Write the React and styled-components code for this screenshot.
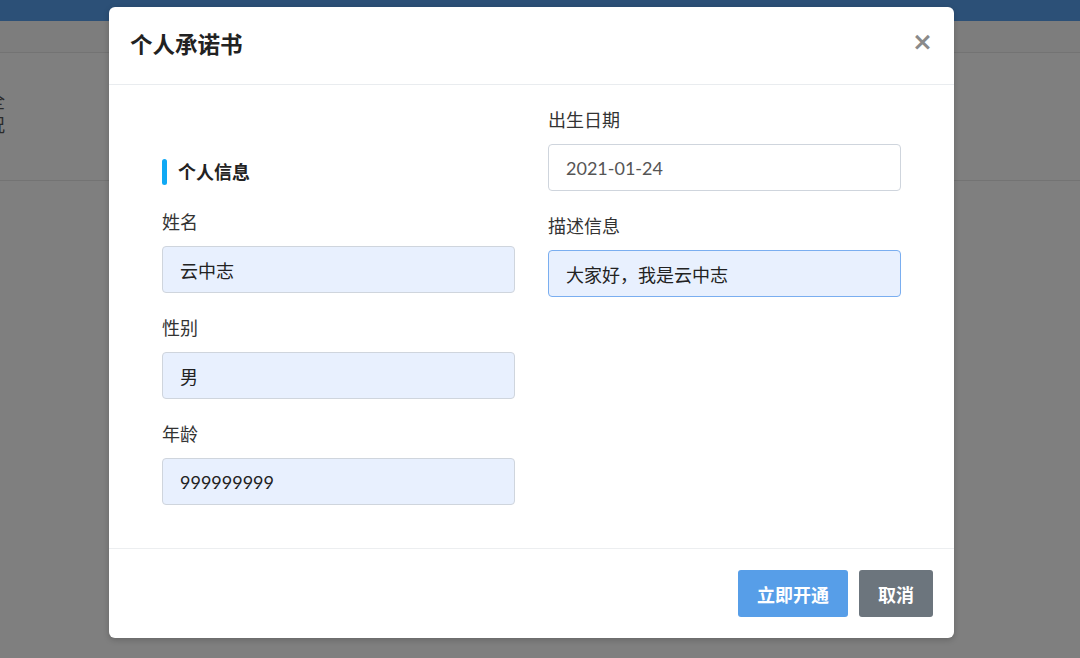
import React from "react";
import styled, { createGlobalStyle } from "styled-components";

const GlobalStyle = createGlobalStyle`
  html, body {
    margin: 0;
    padding: 0;
  }
  body {
    font-family: Lato, "Noto Sans CJK SC", sans-serif;
    color: #333;
    background: #fff;
    overflow: hidden;
  }
  * {
    box-sizing: border-box;
  }
`;

const App = () => {
  return (
    <Page>
      <GlobalStyle />
      <TopBar />
      <TabBar />
      <Section>
        <Fragment>全</Fragment>
        <Fragment>况</Fragment>
      </Section>

      <Overlay>
        <Modal>
          <Header>
            <Title>个人承诺书</Title>
            <Close aria-label="关闭">×</Close>
          </Header>

          <Body>
            <Column $offset>
              <Heading>个人信息</Heading>
              <Field>
                <Label>姓名</Label>
                <Input $filled defaultValue="云中志" readOnly />
              </Field>
              <Field>
                <Label>性别</Label>
                <Input $filled defaultValue="男" readOnly />
              </Field>
              <Field>
                <Label>年龄</Label>
                <Input $filled defaultValue="999999999" readOnly />
              </Field>
            </Column>

            <Column>
              <Field>
                <Label>出生日期</Label>
                <Input $muted defaultValue="2021-01-24" readOnly />
              </Field>
              <Field>
                <Label>描述信息</Label>
                <Input $filled $focused defaultValue="大家好，我是云中志" readOnly />
              </Field>
            </Column>
          </Body>

          <Footer>
            <Button $primary>立即开通</Button>
            <Button>取消</Button>
          </Footer>
        </Modal>
      </Overlay>
    </Page>
  );
};

export default App;

const Page = styled.div`
  position: relative;
  width: 100%;
  height: 100vh;
  overflow: hidden;
`;

const TopBar = styled.div`
  height: 21px;
  background: #58a0ee;
`;

const TabBar = styled.div`
  height: 32px;
  background: #fafafa;
  border-bottom: 1px solid #e6e6e6;
`;

const Section = styled.div`
  height: 128px;
  padding-top: 36px;
  border-bottom: 1px solid #e6e6e6;
`;

const Fragment = styled.div`
  margin-left: -13px;
  font-size: 18px;
  line-height: 24px;
  color: #555;
`;

const Overlay = styled.div`
  position: absolute;
  inset: 0;
  background: rgba(0, 0, 0, 0.5);
  display: flex;
  justify-content: flex-start;
  align-items: flex-start;
  padding: 7px 0 0 109px;
`;

const Modal = styled.div`
  width: 845px;
  background: #fff;
  border-radius: 6px;
  box-shadow: 0 2px 6px rgba(0, 0, 0, 0.2);
  display: flex;
  flex-direction: column;
`;

const Header = styled.div`
  height: 78px;
  padding: 0 22px 0 21px;
  display: flex;
  align-items: center;
  justify-content: space-between;
  border-bottom: 1px solid #e9ecef;
`;

const Title = styled.h2`
  margin: 0;
  font-size: 22.5px;
  font-weight: 700;
  color: #222;
  line-height: 1;
`;

const Close = styled.span`
  font-family: "DejaVu Sans", sans-serif;
  font-size: 25px;
  font-weight: 700;
  line-height: 1;
  color: #8a8a8a;
  margin-top: -8px;
  margin-right: -1px;
  cursor: pointer;
`;

const Body = styled.div`
  display: grid;
  grid-template-columns: 353px 353px;
  column-gap: 33px;
  padding: 22px 53px 21px;
`;

const Column = styled.div`
  display: flex;
  flex-direction: column;
  padding-top: ${(props) => (props.$offset ? "52px" : "0")};
`;

const Heading = styled.h3`
  margin: 0 0 23px;
  position: relative;
  padding-left: 16px;
  font-size: 18px;
  line-height: 27px;
  font-weight: 700;
  color: #222;
  display: flex;
  align-items: center;

  &::before {
    content: "";
    position: absolute;
    left: 0;
    top: 0;
    width: 5px;
    height: 26px;
    border-radius: 3px;
    background: #10a9f4;
  }
`;

const Field = styled.div`
  display: flex;
  flex-direction: column;
  margin-bottom: 22px;
`;

const Label = styled.label`
  font-size: 18px;
  line-height: 27px;
  color: #333;
  margin-bottom: 10px;
`;

const Input = styled.input`
  height: 47px;
  width: 100%;
  padding: 0 17px;
  font-family: Lato, "Noto Sans CJK SC", sans-serif;
  font-size: 18px;
  color: ${(props) => (props.$muted ? "#555" : "#222")};
  background: ${(props) => (props.$filled ? "#e8f0fe" : "#fff")};
  border: 1px solid ${(props) => (props.$focused ? "#7aaef0" : "#cfd5dd")};
  border-radius: 4px;
  outline: none;
`;

const Footer = styled.div`
  display: flex;
  justify-content: flex-end;
  gap: 11px;
  padding: 21px 21px 21px;
  border-top: 1px solid #eceef0;
`;

const Button = styled.button`
  height: 47px;
  padding: 0 19px;
  border: none;
  border-radius: 3px;
  font-family: Lato, "Noto Sans CJK SC", sans-serif;
  font-size: 18px;
  font-weight: 700;
  color: #fff;
  background: ${(props) => (props.$primary ? "#579ee8" : "#6c757d")};
  cursor: pointer;
`;
